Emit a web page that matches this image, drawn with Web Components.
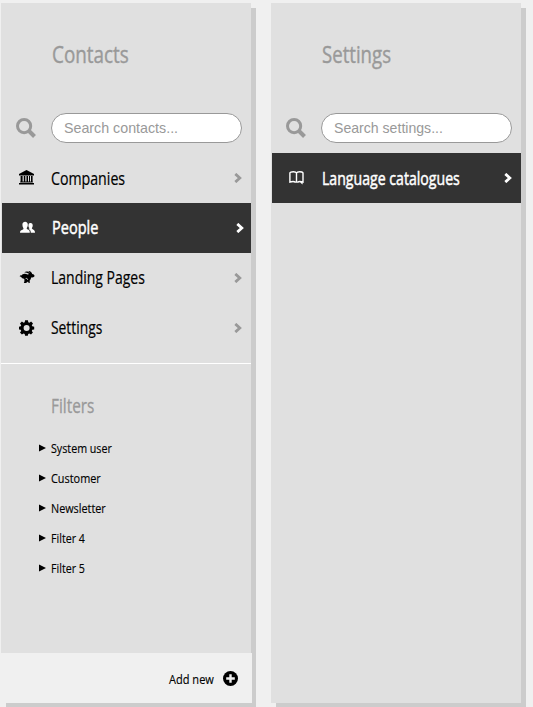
<!DOCTYPE html>
<html lang="en">
<head>
<meta charset="utf-8">
<title>Contacts</title>
<style>
html,body{margin:0;height:707px;overflow:hidden;background:#f0f0f0}
body{font-family:"Open Sans","Noto Sans",sans-serif;color:#000}
</style>
</head>
<body>
<app-board>
  <side-panel>
    <panel-title><fit-text w="77">Contacts</fit-text></panel-title>
    <search-box hint="Search contacts..." w="114"></search-box>
    <nav-item icon="bank"><fit-text w="74">Companies</fit-text></nav-item>
    <nav-item icon="people" active style="--lift:-1px"><fit-text w="46">People</fit-text></nav-item>
    <nav-item icon="rabbit" style="--lift:-1px"><fit-text w="94">Landing Pages</fit-text></nav-item>
    <nav-item icon="gear" style="--lift:-1px"><fit-text w="51.5">Settings</fit-text></nav-item>
    <filter-group>
      <fit-text slot="title" w="43">Filters</fit-text>
      <filter-item><fit-text w="61">System user</fit-text></filter-item>
      <filter-item><fit-text w="50">Customer</fit-text></filter-item>
      <filter-item><fit-text w="54.5">Newsletter</fit-text></filter-item>
      <filter-item><fit-text w="34">Filter 4</fit-text></filter-item>
      <filter-item><fit-text w="34">Filter 5</fit-text></filter-item>
    </filter-group>
    <add-bar slot="footer"><fit-text w="45">Add new</fit-text></add-bar>
  </side-panel>
  <side-panel>
    <panel-title><fit-text w="69">Settings</fit-text></panel-title>
    <search-box hint="Search settings..." w="109"></search-box>
    <nav-item icon="book" active style="--end:9px"><fit-text w="138">Language catalogues</fit-text></nav-item>
  </side-panel>
</app-board>
<script>
const define = (name, html, setup) => {
  const t = document.createElement('template');
  t.innerHTML = html;
  customElements.define(name, class extends HTMLElement {
    constructor() {
      super();
      this.attachShadow({mode: 'open'}).append(t.content.cloneNode(true));
    }
    connectedCallback() { if (setup) setup(this, this.shadowRoot); }
  });
};

const icons = {
  bank: '<path d="M8.500 0 16 4v1.400H1V4zM2.600 6h2v5.600h-2zM5.800 6h1.500v5.600H5.800zM8.500 6H10v5.600H8.500zM11 6h1v5.600h-1zM13 6h1.600v5.600H13zM2.200 11.600h12.600v1H2.200zM1 13h15v1.600H1z"/>',
  people: '<g transform="translate(1 0)"><path d="M0 12.800c0-2 .8-2.400 2.400-3 1-.5 1.200-.8 1-1.600C2.600 7 2.300 5.800 2.400 4.600 2.500 2.600 3.600 1.700 5.100 1.700s2.600.9 2.700 2.900C7.900 5.800 7.600 7 6.800 8c-.2.8 0 1.100 1.200 1.600 1.300.6 1.800 1.200 1.800 3.200z"/><path d="M10.800 12.800c0-1.900-.5-3-2.200-3.800.8-.3.900-.6.6-1.200-.8-.7-.8-1.800-.7-2.800.1-1.400.9-2 2.100-2s2 .7 2.100 2c.1 1.200-.1 2.100-.8 3-.1.800.2 1 1.100 1.400 1.400.5 2 1.400 2 3.400z"/></g>',
  rabbit: '<g transform="translate(1.600 0)"><path d="M3.200 4.300C4.600 3.300 6.500 3.700 8 4.600L9.600 4C8 2.500 6.200 2.900 4.700 2.300 6.500.8 8.800 1.300 10.400 3L8.600.9C11 .8 12.300 2.400 12.600 4c1.200.1 2.200.9 2.400 1.900-.5 1.100-2 1.400-3.500 1.600-.2 1.200-.6 2.400-1.500 3.200l.3 2-1.200.3-.7-1.400c-.9 1.300-2.900 2-4.200 1.100C5.300 11.500 4.600 10 4.800 8.900 3 8.800 2 8 1.700 7.100L0 6.300c.5-.9 1.300-1.100 2-.8.2-.5.600-.9 1.200-1.200z"/><path d="M6.100 8.600c1.100-.5 2 0 1.900 1.200" fill="none" stroke="#e0e0e0" stroke-width=".9"/></g>',
  gear: '<path transform="translate(1 .3)" fill-rule="evenodd" d="M6.100 0h2.800l.4 2 1.100.5L12.100 1.300l1.900 1.900-1.200 1.700.5 1.100 1.900.4v2.700l-1.900.4-.5 1.200 1.100 1.600-1.900 2-1.700-1.200-1.100.5-.4 1.800H6.100l-.4-1.800-1.100-.5L2.900 14.300l-1.900-2 1.200-1.600-.5-1.200L0 9.100V6.400L1.700 6l.5-1.100L1 3.200l1.900-1.900 1.700 1.200L5.700 2zM7.600 4.700a3 3 0 1 0 0 6 3 3 0 0 0 0-6z"/>',
  book: '<path fill="none" stroke="currentColor" stroke-width="1.400" d="M7.500 12V3C7.100 2 6 1.700 4.300 1.700 2.500 1.700 1.300 1.900.9 2.800v9.200c1.700-.5 4.400-.7 5.400.1h2.400c1.100-.8 3.600-.6 5.300-.1V2.800c-.5-.9-1.700-1.100-3.300-1.100S7.900 2 7.500 3"/><path d="M10.600 11.500h3v3l-1.300-1.100z"/>'
};

/* Text set condensed to a given advance width. */
define('fit-text', `<style>
:host{display:inline-block;white-space:nowrap;line-height:inherit;width:var(--w)}
span{display:inline-block;transform-origin:0 50%}
</style><span><slot></slot></span>`, (el, r) => {
  const w = +el.getAttribute('w');
  el.style.setProperty('--w', w + 'px');
  requestAnimationFrame(() => {
    const s = r.querySelector('span');
    s.style.transform = `scaleX(${w / s.offsetWidth})`;
  });
});

define('app-board', `<style>
:host{display:flex;gap:20px;padding:3px 0 0 1px;width:540px;box-sizing:border-box}
</style><slot></slot>`);

define('side-panel', `<style>
:host{display:flex;flex:none;flex-direction:column;width:250px;height:700px;background:#e0e0e0;box-shadow:5px 5px 0 #ccc}
main{flex:1;min-height:0}
</style><main><slot></slot></main><slot name="footer"></slot>`);

define('panel-title', `<style>
:host{display:block;height:110px;padding:34px 0 0 51px;box-sizing:border-box;font-size:24px;line-height:34px;color:#999;-webkit-text-stroke:.4px #999}
</style><slot></slot>`);

define('search-box', `<style>
:host{display:flex;height:40px;padding-left:15px;gap:15px;color:#999}
svg{width:20px;height:20px;margin-top:5px}
div{width:191px;height:30px;box-sizing:border-box;border:1px solid #999;border-radius:15px;background:#fff;padding-left:12px;font:15px/28px "Liberation Sans",Arial,sans-serif}
</style><svg viewBox="0 0 20 20"><circle cx="8.100" cy="8.100" r="6.600" fill="none" stroke="#999" stroke-width="3"/><path d="m13 13 5.500 5.500" stroke="#999" stroke-width="4"/></svg><div><fit-text></fit-text></div>`, (el, r) => {
  const t = r.querySelector('fit-text');
  t.setAttribute('w', el.getAttribute('w'));
  t.textContent = el.getAttribute('hint');
  t.replaceWith(t.cloneNode(true));
});

define('nav-item', `<style>
:host{display:flex;height:50px;align-items:center;font-size:18px;line-height:26px;padding:0 9px 0 17px;box-sizing:border-box;-webkit-text-stroke:.2px currentColor}
:host([active]){background:#333;color:#fff;margin-left:1px;padding:0 var(--end,7px) 0 17px;-webkit-text-stroke:.5px #fff}
.i{width:17px;height:16px;margin-right:16px;fill:currentColor}
:host([active]) .i{margin-right:15.500px}
.t{flex:1;transform:translateY(var(--lift,0))}
.c{width:8px;height:10px}
</style><svg class="i" viewBox="0 0 17 16"></svg><span class="t"><slot></slot></span><svg class="c" viewBox="0 0 8 10"><path d="m1.300.9 4.500 4.100-4.500 4.100" fill="none" stroke-width="2.800"/></svg>`, (el, r) => {
  r.querySelector('.i').innerHTML = icons[el.getAttribute('icon')];
  r.querySelector('.c path').setAttribute('stroke', el.hasAttribute('active') ? '#fff' : '#999');
});

define('filter-group', `<style>
:host{display:block;margin-top:10px;border-top:1px solid #fff}
header{padding:28px 0 13px 50px;font-size:20px;line-height:28px;color:#999;-webkit-text-stroke:.3px #999}
</style><header><slot name="title"></slot></header><slot></slot>`);

define('filter-item', `<style>
:host{display:flex;height:30px;align-items:center;padding-left:38px;font-size:13.500px;line-height:20px;-webkit-text-stroke:.15px #000}
svg{width:7px;height:8px;margin:-1px 5px 0 0}
</style><svg viewBox="0 0 7 8"><path d="M0 .5 7 4 0 7.500z"/></svg><slot></slot>`);

define('add-bar', `<style>
:host{display:flex;width:251px;height:50px;box-sizing:border-box;align-items:center;justify-content:flex-end;gap:9px;padding:0 14px 0 0;background:#f0f0f0;font-size:13.500px;line-height:20px;-webkit-text-stroke:.15px #000}
svg{width:15px;height:15px}
::slotted(*){padding-top:2px}
</style><slot></slot><svg viewBox="0 0 15 15"><circle cx="7.500" cy="7.500" r="7.500"/><path d="M7.500 3.200v8.600M3.200 7.500h8.600" stroke="#f0f0f0" stroke-width="2.400"/></svg>`);
</script>
</body>
</html>
